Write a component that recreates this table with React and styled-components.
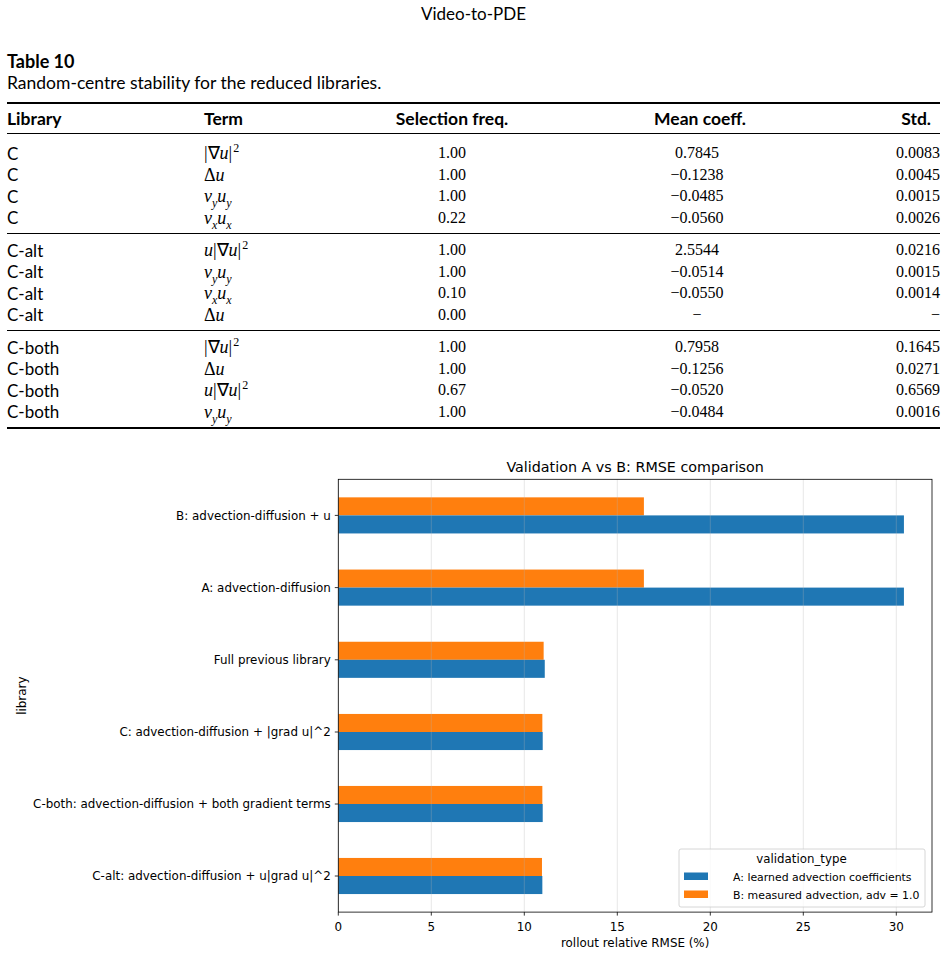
import styled, {createGlobalStyle} from 'styled-components'

const GlobalStyle = createGlobalStyle`
  html, body {
    margin: 0;
    padding: 0;
    background: #fff;
    color: #000;
  }
`

const Page = styled.div`
  width: 947px;
  height: 955px;
  overflow: hidden;
  font-family: Lato, "Noto Sans", sans-serif;
`

const RunningHead = styled.div`
  padding-top: 4px;
  height: 22px;
  line-height: 20px;
  font-size: 17px;
  text-align: center;
`

const Caption = styled.div`
  padding: 24px 7px 0;

  & .label {
    font-size: 18px;
    font-weight: bold;
    line-height: 22px;
  }

  & .text {
    font-size: 17.5px;
    line-height: 22px;
  }
`

const Table = styled.div`
  margin: 8px 7px 0;
  width: 933px;
  border-top: 2px solid #000;
  border-bottom: 2px solid #000;
`

const Group = styled.div`
  padding: ${p => p.$head ? '0' : `${p.$first ? 8 : 5}px 0 5px`};
  & + & {
    border-top: 1px solid #000;
  }
`

const Row = styled.div`
  display: grid;
  grid-template-columns: 197px 170px 156px 340px 1fr;
  align-items: center;
  height: ${p => p.$head ? '29px' : '21.5px'};
  font-size: ${p => p.$head ? '17.5px' : '17px'};
  font-weight: ${p => p.$head ? 'bold' : 'normal'};
`

const Cell = styled.div`
  text-align: ${p => p.$align || 'left'};
  padding-right: ${p => p.$pr || 0}px;
  white-space: nowrap;
`

const Num = styled(Cell)`
  font-family: "Liberation Serif", serif;
  font-size: 16px;
`

const Math = styled.span`
  font-family: "Liberation Serif", serif;
  font-size: 18px;
  white-space: nowrap;

  & i {
    font-style: italic;
  }

  & sup {
    font-size: 12px;
    vertical-align: 7px;
    line-height: 0;
    margin-left: 1px;
  }

  & sub {
    font-size: 12px;
    vertical-align: -4.5px;
    line-height: 0;
    font-style: italic;
  }
`

const ChartBox = styled.svg`
  display: block;
  margin-top: 10px;
  font-family: "DejaVu Sans", sans-serif;
`

const terms = {
  grad2: <Math>|∇<i>u</i>|<sup>2</sup></Math>,
  lap: <Math>Δ<i>u</i></Math>,
  vyuy: <Math><i>v</i><sub>y</sub><i>u</i><sub>y</sub></Math>,
  vxux: <Math><i>v</i><sub>x</sub><i>u</i><sub>x</sub></Math>,
  ugrad2: <Math><i>u</i>|∇<i>u</i>|<sup>2</sup></Math>,
}

const groups = [
  [
    ['C', 'grad2', '1.00', '0.7845', '0.0083'],
    ['C', 'lap', '1.00', '−0.1238', '0.0045'],
    ['C', 'vyuy', '1.00', '−0.0485', '0.0015'],
    ['C', 'vxux', '0.22', '−0.0560', '0.0026'],
  ],
  [
    ['C-alt', 'ugrad2', '1.00', '2.5544', '0.0216'],
    ['C-alt', 'vyuy', '1.00', '−0.0514', '0.0015'],
    ['C-alt', 'vxux', '0.10', '−0.0550', '0.0014'],
    ['C-alt', 'lap', '0.00', '−', '−'],
  ],
  [
    ['C-both', 'grad2', '1.00', '0.7958', '0.1645'],
    ['C-both', 'lap', '1.00', '−0.1256', '0.0271'],
    ['C-both', 'ugrad2', '0.67', '−0.0520', '0.6569'],
    ['C-both', 'vyuy', '1.00', '−0.0484', '0.0016'],
  ],
]

// chart, drawn in page coordinates (viewBox starts where the svg sits)
const TOP = 439
const X0 = 338.3
const XR = 932
const PX = 18.6
const YT = 479.3
const YB = 912.1
const BAR = 18.05
const BLUE = '#1f77b4'
const ORANGE = '#ff7f0e'

const bars = [
  {label: 'B: advection-diffusion + u', y: 515.4, a: 30.41, b: 16.43},
  {label: 'A: advection-diffusion', y: 587.6, a: 30.41, b: 16.43},
  {label: 'Full previous library', y: 659.8, a: 11.10, b: 11.04},
  {label: 'C: advection-diffusion + |grad u|^2', y: 732, a: 10.99, b: 10.97},
  {label: 'C-both: advection-diffusion + both gradient terms', y: 804, a: 10.99, b: 10.97},
  {label: 'C-alt: advection-diffusion + u|grad u|^2', y: 876, a: 10.97, b: 10.95},
]

const ticks = [0, 5, 10, 15, 20, 25, 30]

function Chart () {
  return (
    <ChartBox width='947' height={955 - TOP} viewBox={`0 ${TOP} 947 ${955 - TOP}`}>
      <text x={(X0 + XR) / 2} y='472' fontSize='14.3' textAnchor='middle'>
        Validation A vs B: RMSE comparison
      </text>
      {bars.map(bar => (
        <g key={bar.label}>
          <rect x={X0} y={bar.y - BAR} width={bar.b * PX} height={BAR} fill={ORANGE}/>
          <rect x={X0} y={bar.y} width={bar.a * PX} height={BAR} fill={BLUE}/>
          <line x1={X0 - 3.5} x2={X0} y1={bar.y} y2={bar.y} stroke='#000' strokeWidth='0.8'/>
          <text x={X0 - 7.5} y={bar.y + 4.3} fontSize='11.9' textAnchor='end'>{bar.label}</text>
        </g>
      ))}
      {ticks.map(t => (
        <g key={t}>
          <line x1={X0 + t * PX} x2={X0 + t * PX} y1={YT} y2={YB} stroke='#b0b0b0' strokeOpacity='0.35' strokeWidth='0.9'/>
          <line x1={X0 + t * PX} x2={X0 + t * PX} y1={YB} y2={YB + 3.5} stroke='#000' strokeWidth='0.8'/>
          <text x={X0 + t * PX} y='930.5' fontSize='11.9' textAnchor='middle'>{t}</text>
        </g>
      ))}
      <rect x={X0} y={YT} width={XR - X0} height={YB - YT} fill='none' stroke='#000' strokeWidth='0.8'/>
      <text x={(X0 + XR) / 2} y='946.5' fontSize='11.9' textAnchor='middle'>rollout relative RMSE (%)</text>
      <text x='0' y='0' fontSize='11.9' textAnchor='middle' transform={`translate(25.5 ${(YT + YB) / 2}) rotate(-90)`}>
        library
      </text>
      <g>
        <rect x='679' y='849' width='246' height='58' rx='2' fill='#fff' fillOpacity='0.8' stroke='#ccc' strokeWidth='0.8'/>
        <text x='801.5' y='863' fontSize='11.8' textAnchor='middle'>validation_type</text>
        <rect x='684' y='872.5' width='24' height='7.5' fill={BLUE}/>
        <text x='733' y='881' fontSize='10.9'>A: learned advection coefficients</text>
        <rect x='684' y='890.5' width='24' height='7.5' fill={ORANGE}/>
        <text x='733' y='899' fontSize='10.9'>B: measured advection, adv = 1.0</text>
      </g>
    </ChartBox>
  )
}

export default function App () {
  return (
    <Page>
      <GlobalStyle/>
      <RunningHead>Video-to-PDE</RunningHead>
      <Caption>
        <div className='label'>Table 10</div>
        <div className='text'>Random-centre stability for the reduced libraries.</div>
      </Caption>
      <Table>
        <Group $head>
          <Row $head>
            <Cell>Library</Cell>
            <Cell>Term</Cell>
            <Cell $align='center'>Selection freq.</Cell>
            <Cell $align='center'>Mean coeff.</Cell>
            <Cell $align='right' $pr={9}>Std.</Cell>
          </Row>
        </Group>
        {groups.map((rows, i) => (
          <Group key={i} $first={i === 0}>
            {rows.map((r, j) => (
              <Row key={j}>
                <Cell>{r[0]}</Cell>
                <Cell>{terms[r[1]]}</Cell>
                <Num $align='center'>{r[2]}</Num>
                <Num $align='center' $pr={6}>{r[3]}</Num>
                <Num $align='right'>{r[4]}</Num>
              </Row>
            ))}
          </Group>
        ))}
      </Table>
      <Chart/>
    </Page>
  )
}
